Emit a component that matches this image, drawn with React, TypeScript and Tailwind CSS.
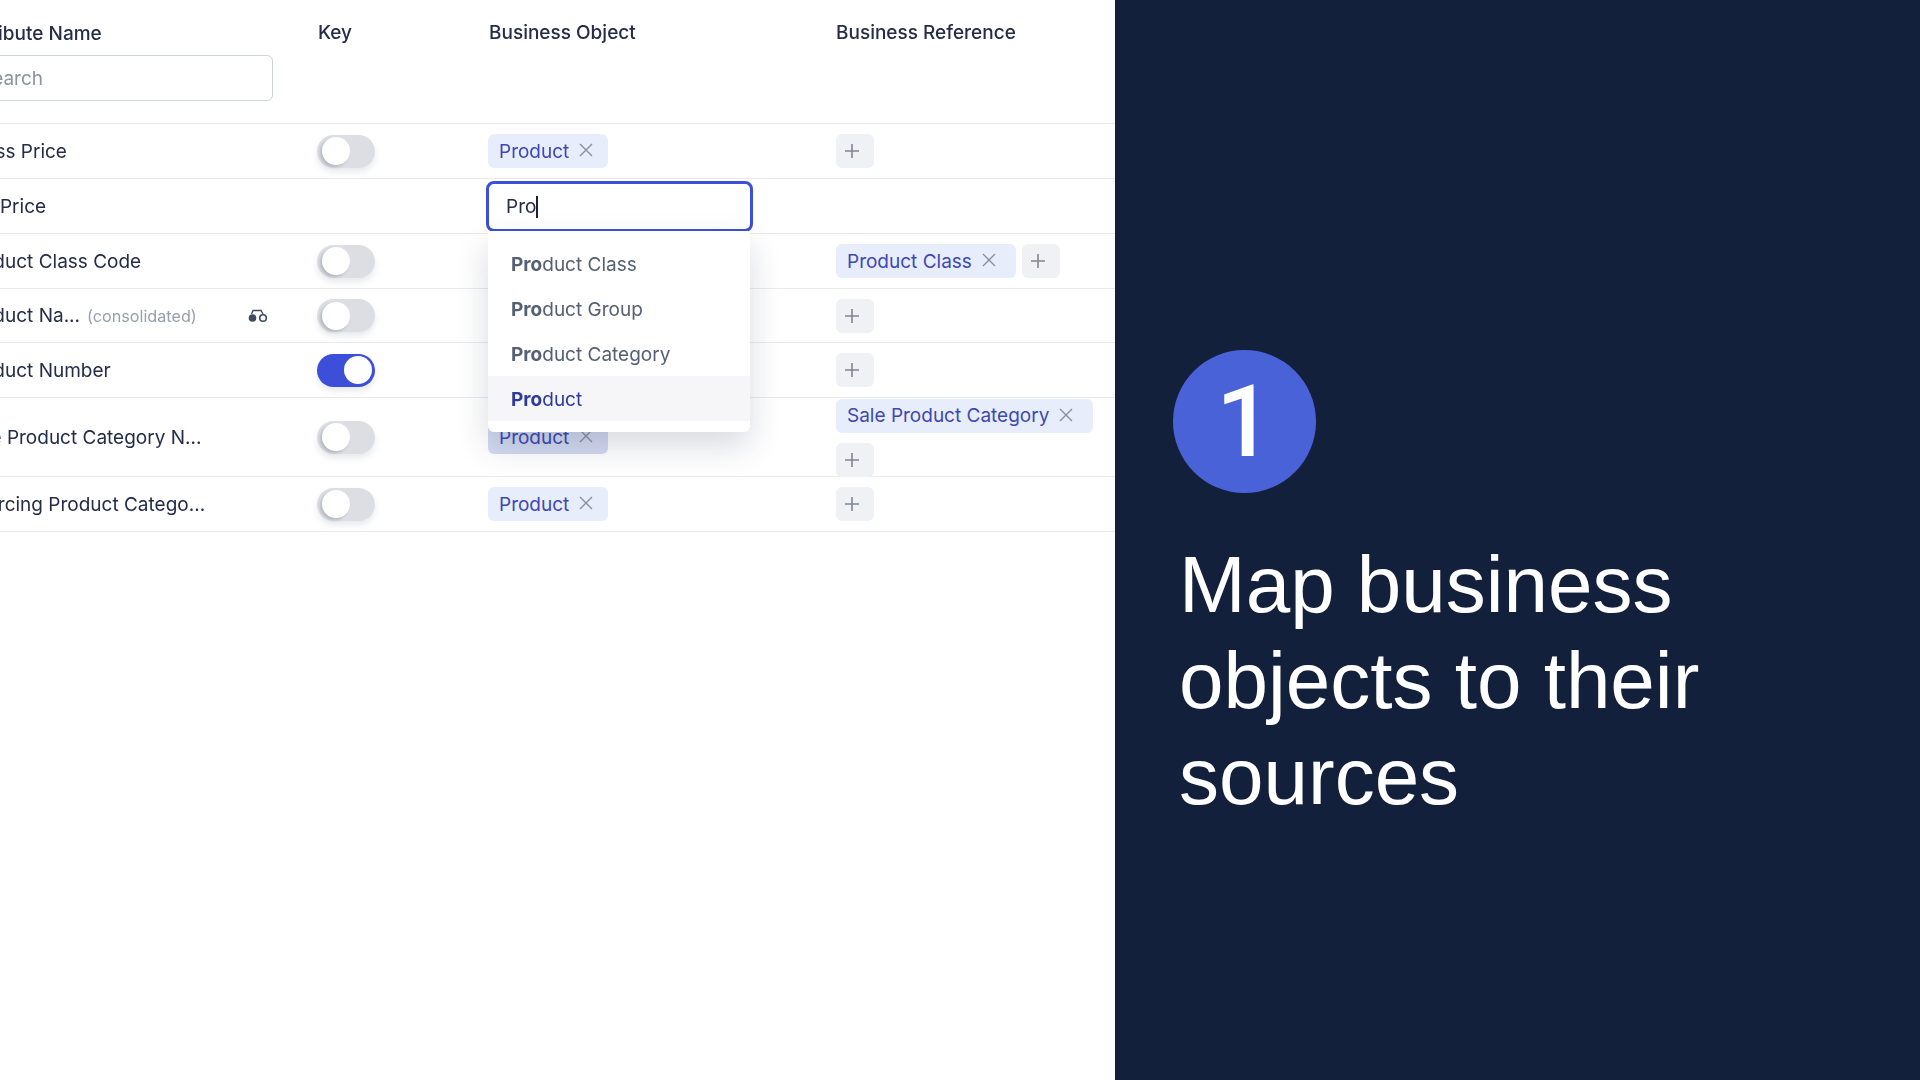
import React from "react";

const X = ({ className = "" }: { className?: string }) => (
  <svg viewBox="0 0 14 14" className={`w-[14px] h-[14px] ${className}`} fill="none" stroke="#8a8f9e" strokeWidth="1.4">
    <path d="M1 1 L13 13 M13 1 L1 13" />
  </svg>
);

const Tag = ({ label, dim = false, wide = false }: { label: string; dim?: boolean; wide?: boolean }) => (
  <div className={`h-[34px] rounded-[6px] pl-[11px] flex items-center gap-[10px] text-[19px] w-fit whitespace-nowrap text-[#3c48b4] ${wide ? "pr-[20px]" : "pr-[15px]"} ${dim ? "bg-[#d3daf0]" : "bg-[#e8edfb]"}`}>
    <span className="mt-[2px]">{label}</span>
    <X className="-mt-[2px]" />
  </div>
);

const Plus = () => (
  <div className="w-[38px] h-[34px] rounded-[6px] bg-[#f0f1f4] flex items-center pl-[9px] shrink-0">
    <svg viewBox="0 0 14 14" className="w-[14px] h-[14px]" fill="none" stroke="#7f8694" strokeWidth="1.6">
      <path d="M7 0 V14 M0 7 H14" />
    </svg>
  </div>
);

const Toggle = ({ on = false }: { on?: boolean }) => (
  <div className={`w-[58px] h-[33px] rounded-full flex items-center px-[3px] shadow-[0_4px_6px_rgba(60,70,100,0.12)] ${on ? "bg-[#3d4ed8] justify-end" : "bg-[#dcdee3] justify-start pl-[5px]"}`}>
    <div className={`w-[28px] h-[28px] rounded-full bg-white ${on ? "" : "shadow-[-2px_2px_3px_rgba(60,70,100,0.25)]"}`} />
  </div>
);

const Row = ({
  h,
  name,
  extra,
  toggle = "off",
  obj,
  refs,
}: {
  h: string;
  name: React.ReactNode;
  extra?: React.ReactNode;
  toggle?: "off" | "on" | "none";
  obj?: React.ReactNode;
  refs?: React.ReactNode;
}) => (
  <div className={`flex items-center border-b-[1.5px] border-[#e9eaee] ${h}`}>
    <div className="w-[353px] shrink-0 flex items-center text-[19px] text-[#232d47] whitespace-nowrap pt-[2px] -translate-x-[2px]">
      {name}
      {extra}
    </div>
    <div className="w-[171px] shrink-0 -ml-[1px]">{toggle !== "none" && <Toggle on={toggle === "on"} />}</div>
    <div className="w-[348px] shrink-0">{obj}</div>
    <div className="flex-1">{refs}</div>
  </div>
);

const Option = ({ rest, active = false }: { rest: string; active?: boolean }) => (
  <div className={`h-[45px] pl-[23px] flex items-center text-[19px] pt-[4px] ${active ? "bg-[#f6f6f8] text-[#2f3a9e]" : "text-[#566074]"}`}>
    <span className="font-bold">Pro</span>
    <span>{rest}</span>
  </div>
);

export default function App() {
  return (
    <div className="w-[1920px] h-[1080px] flex overflow-hidden bg-white" style={{ fontFamily: "Inter, sans-serif" }}>
      <div className="w-[1115px] shrink-0 overflow-hidden">
        <div className="w-[1150px] -ml-[35px] blur-[0.4px]">
          <div className="flex h-[124px] border-b-[1.5px] border-[#e9eaee] text-[19px] font-medium text-[#232d47]">
            <div className="w-[353px] shrink-0 pt-[20px]">
              <div>Attribute Name</div>
              <div className="w-[308px] h-[46px] mt-[6px] border-[1.5px] border-[#ccd1dc] rounded-[6px] flex items-center pl-[14px] pt-[3px] text-[#8b92a1] font-normal">
                Search
              </div>
            </div>
            <div className="w-[171px] shrink-0 pt-[19px]">Key</div>
            <div className="w-[347px] shrink-0 pt-[19px]">Business Object</div>
            <div className="flex-1 pt-[19px]">Business Reference</div>
          </div>

          <Row h="h-[55px]" name="Gross Price" obj={<Tag label="Product" />} refs={<Plus />} />
          <Row
            h="h-[55px]"
            name="Net Price"
            toggle="none"
            obj={
              <div className="relative -ml-[2px] z-10">
                <div className="w-[267px] h-[51px] border-[3.5px] border-[#3b4fd8] rounded-[8px] flex items-center pl-[17px] pt-[2px] text-[19px] text-[#232d47] bg-white">
                  Pro
                  <span className="inline-block w-[1.5px] h-[22px] bg-[#1a2238]" />
                </div>
                <div className="absolute left-[2px] top-[50px] w-[262px] h-[201px] bg-white rounded-b-[6px] pt-[10px] shadow-[0_14px_32px_rgba(40,50,80,0.18)]">
                  <Option rest="duct Class" />
                  <Option rest="duct Group" />
                  <Option rest="duct Category" />
                  <Option rest="duct" active />
                </div>
              </div>
            }
          />
          <Row
            h="h-[55px]"
            name="Product Class Code"
            obj={<Tag label="Product" />}
            refs={
              <div className="flex gap-[6px]">
                <Tag label="Product Class" wide />
                <Plus />
              </div>
            }
          />
          <Row
            h="h-[54px]"
            name={<span className="w-[123px]">Product Na...</span>}
            extra={
              <>
                <span className="text-[16.2px] text-[#979eae] ml-[1px] w-[161px]">(consolidated)</span>
                <svg viewBox="0 0 20 14" className="w-[20px] h-[14px] -mt-[2px]" fill="none">
                  <circle cx="4.5" cy="9" r="3.8" fill="#3f4a62" />
                  <circle cx="15" cy="9" r="3.3" stroke="#3f4a62" strokeWidth="1.6" />
                  <path d="M3.5 5 L5 1.5 H13 L15 5" stroke="#3f4a62" strokeWidth="1.4" />
                </svg>
              </>
            }
            obj={<Tag label="Product" />}
            refs={<Plus />}
          />
          <Row h="h-[55px]" name="Product Number" toggle="on" obj={<Tag label="Product" />} refs={<Plus />} />
          <Row
            h="h-[79px]"
            name="Sale Product Category N..."
            obj={<Tag label="Product" dim />}
            refs={
              <div className="flex flex-col gap-[10px] pt-[1px]">
                <Tag label="Sale Product Category" wide />
                <Plus />
              </div>
            }
          />
          <Row h="h-[55px]" name="Sourcing Product Catego..." obj={<Tag label="Product" />} refs={<Plus />} />
        </div>
      </div>

      <div className="flex-1 bg-[#13203b] pt-[350px] pl-[58px] text-white" style={{ fontFamily: '"Liberation Sans", Arial, sans-serif' }}>
        <div className="w-[143px] h-[143px] rounded-full bg-[#4a62d8] flex items-center justify-center text-[100px] font-medium" style={{ fontFamily: "Roboto, sans-serif" }}>1</div>
        <div className="w-[600px] mt-[44px] ml-[6px] text-[80px] leading-[96px]">Map business objects to their sources</div>
      </div>
    </div>
  );
}
